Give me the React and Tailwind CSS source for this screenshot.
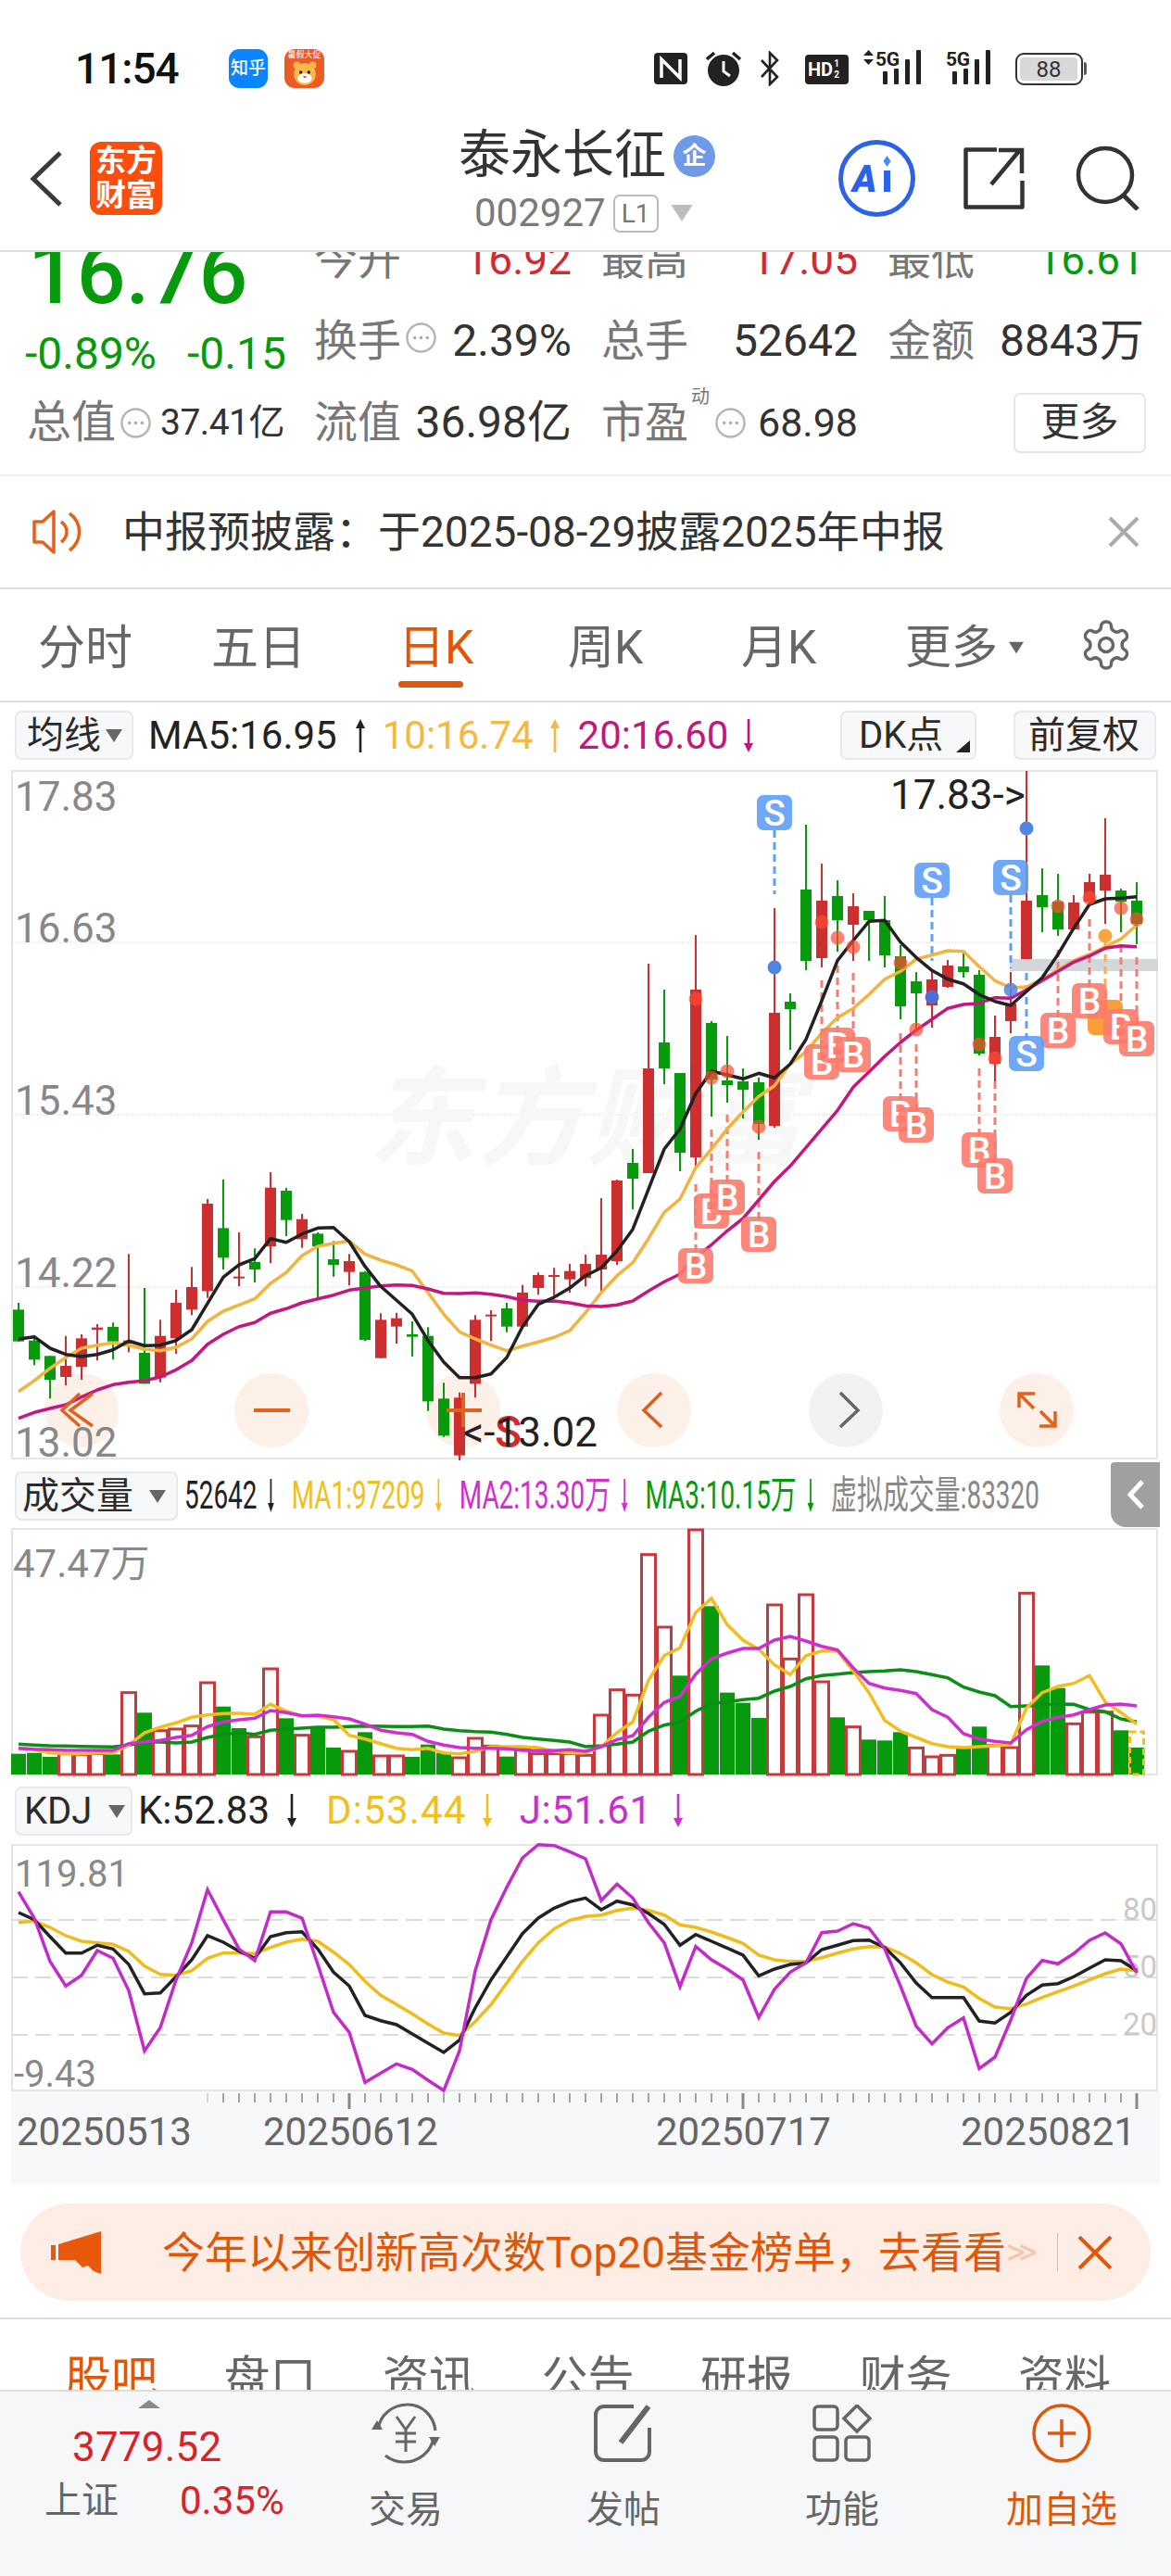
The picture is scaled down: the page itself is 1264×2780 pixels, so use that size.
import React from "react";

const X = (i) => 20 + 17 * i;
const z = (vals, off) => vals.map((v) => off + v / 3);
const pts = (ys) => ys.map((y, i) => `${X(i)},${y.toFixed(1)}`).join(" ");

const RED = "#cc2f2f";
const GREEN = "#079a0d";

const c1 = [
  [678,700,803,803,"g"],[782,800,862,880,"g"],[850,850,927,988,"g"],[785,882,918,945,"r"],[780,793,885,927,"r"],
  [747,758,765,865,"r"],[742,756,803,862,"g"],[520,800,810,838,"r"],[630,840,940,940,"g"],[733,785,920,935,"r"],
  [635,678,793,843,"r"],[562,627,700,718,"r"],[342,357,640,662,"r"],[278,436,532,570,"g"],[450,593,597,625,"r"],
  [502,546,570,612,"g"],[255,305,495,550,"r"],[306,315,410,462,"g"],[390,407,472,500,"r"],[450,454,495,660,"g"],
  [478,537,555,593,"g"],[520,543,578,622,"r"],[575,578,798,802,"g"],[712,733,857,857,"r"],[710,728,755,810,"r"],
  [738,780,788,852,"g"],[757,785,997,1028,"g"],[937,988,1108,1112,"g"],[968,985,1172,1188,"r"],[718,733,940,985,"r"],
  [702,716,720,802,"r"],[678,696,755,773,"g"],[620,645,755,755,"r"],[580,588,630,652,"r"],[565,588,592,655,"r"],
  [552,575,602,645,"r"],[522,552,598,625,"r"],
].map(([a, b, c, d, k]) => [1180 + a / 3, 1180 + b / 3, 1180 + c / 3, 1180 + d / 3, k]);

const c2 = [
  [1293,1354,1370,1393,"r"],[1273,1274,1361,1365,"r"],[1240,1255,1272,1305,"g"],[1040,1153,1266,1266,"r"],[1068,1125,1153,1170,"g"],
  [1158,1158,1244,1264,"g"],[1009,1068,1249,1260,"r"],[1102,1104,1165,1205,"g"],[1118,1166,1171,1190,"g"],[1153,1167,1176,1207,"g"],
  [1163,1168,1213,1230,"g"],[980,1093,1215,1217,"r"],[1072,1081,1089,1133,"g"],[890,960,1037,1047,"g"],[932,972,1034,1044,"r"],
  [950,967,993,1027,"g"],[964,978,998,1037,"r"],[983,983,993,1037,"g"],[967,993,1031,1044,"g"],[1020,1032,1086,1100,"g"],
  [1049,1059,1072,1110,"g"],[1047,1057,1085,1109,"r"],[1036,1042,1065,1066,"r"],[1028,1043,1049,1055,"g"],[1047,1052,1137,1139,"g"],
  [1096,1119,1148,1167,"r"],[1049,1083,1102,1115,"r"],[832,972,1035,1035,"r"],[937,966,979,1006,"g"],[943,973,1003,1010,"g"],
  [966,974,1003,1003,"r"],[943,952,973,977,"r"],[883,944,961,997,"r"],[959,961,973,1006,"g"],[952,972,997,1019,"g"],
];
const candles = [...c1, ...c2];

const black = [
  ...z([795,788,825,845,852,845,830,802,817,815,800,765,680,595,555,535,470,482,455,436,434,480,560,625,670,715,800,870,920,920,908,855,755,683,660,630,590],1180),
  ...z([565,510,440,310,180,115],1180),
  ...z([1260,1188,1200,1213,1195,1210,1165,1085,960,830,765,703,700,770,820,862,890,905,940,962,975,930,885,810,725,648,630,628,623],760),
];
const orange = [
  ...z([965,930,890,855,825,815,808,815,828,833,822,795,738,705,685,665,615,580,525,495,485,478,520,540,555,575,645,715,772,795,815,833,818,805,790,768,710],1180),
  ...z([645,590,548,470,385,342,240,180,115,60,10],1180),
  ...z([1235,1165,1125,1065,1015,985,940,890,865,825,812,798,800,850,895,918,915,890,860,830,810,785,760,715],760),
];
const magenta = [
  ...z([1052,1033,1020,1008,983,960,943,935,930,918,895,865,812,780,755,742,712,697,678,665,653,637,630,623,620,622,633,647,648,646,650,658,670,673,672,678,688],1180),
  ...z([690,685,672,640,610,585,530,490,445,405,345,285,235,175,115,55],1180),
  ...z([1240,1190,1140,1095,1055,1020,985,972,968,950,952,925,895,865,835,815,790,782,785],760),
];

const bBadges = [
  [43,1366,1278],[44,1307,1219],[45,1292,1203],[47,1332,1243],
  [51,1146,1058],[52,1128,1042],[53,1138,1050],[56,1202,1115],
  [57,1214,1127],[61,1241,1153],[62,1269,1167],[66,1112,1025],
  [68,1080,992],[70,1108,1020],[71,1121,1033],
];
const redDots = [[43,1078],[44,1163],[45,1156],[47,1216],[51,995],[52,1012],[53,1022],[56,1039],[57,1111],[61,1127],[62,1142],[66,978],[68,969],[70,980],[71,992]];

const vol1 = "908g 905g 918g 905r 908r 905r 910g 707r 775g 830r 825r 815r 675r 755g 825g 850r 630r 793g 845r 820g 888g 897r 838g 912r 912r 918g 878g 905g 918r 855r 880r 917g 888r 905r 905r 905r 910r".split(" ");
const vol2 = "780r 698r 715r 260r 495r 655g 180r 430g 710g 743g 792g 423r 598r 390r 672r 790g 818r 862g 865g 838g 886r 915r 910r 890g 820g 878r 885r 385r 622g 695g 808r 770r 770r 832g 888g".split(" ");
const vols = [...vol1, ...vol2].map((s) => [1590 + parseInt(s) / 3, s.slice(-1)]);
const volY = z([890,895,905,908,908,905,905,880,840,822,808,790,782,778,777,780,748,770,785,787,797,848,860,875,890,895,890,905,908,900,885,885,885,888,900,905,905,885,840,805,670,590,565,450,405,490,540,570,620,652,590,575,575,640,710,800,835,855,875,885,888,885,882,878,760,710,690,680,655,740,775,812],1590);
const volM = z([890,893,895,897,897,897,897,875,870,865,855,848,820,805,798,793,768,775,785,783,788,795,812,832,840,845,868,880,888,890,890,892,897,898,898,895,900,885,862,850,790,742,722,650,600,582,567,567,540,528,543,560,572,630,680,695,703,713,765,790,843,860,868,873,830,803,790,782,765,750,747,753],1590);
const volG = z([877,880,882,883,884,885,886,880,870,870,873,870,855,845,840,845,832,828,825,822,822,820,818,819,820,820,818,828,833,836,838,845,855,860,865,870,885,882,877,870,835,815,805,770,745,740,733,728,705,690,665,655,650,645,642,640,636,642,652,662,692,708,720,755,753,750,747,748,765,772,795,805],1590);

const kdjJ = z([305,390,530,610,575,495,520,625,820,745,590,470,298,395,490,528,370,370,390,540,695,760,922,892,862,880,915,948,820,560,395,290,195,152,155,175,198,333,280,325,405,470,612,482,525,555,590,712,620,565,535,437,432,408,422,490,610,740,797,745,713,877,840,720,585,527,538,505,462,438,473,567],1940);
const kdjK = z([372,395,450,503,503,478,490,540,635,632,580,525,447,468,497,520,450,437,434,490,565,610,705,722,735,765,795,825,785,680,590,515,440,390,358,337,325,363,335,347,375,410,478,443,465,487,510,577,555,540,535,492,478,463,461,485,535,600,647,647,647,723,730,695,640,607,602,580,552,525,528,560],1940);
const kdjD = z([404,400,420,447,465,470,475,498,545,572,575,560,520,503,503,505,485,468,458,465,500,540,595,640,670,700,733,762,770,725,670,600,530,470,425,397,385,380,365,358,365,380,412,420,435,453,472,510,525,530,530,518,503,490,482,483,505,535,573,597,613,650,678,683,668,647,628,610,590,570,555,560],1940);

function DotCircle({ className }) {
  return (
    <svg viewBox="0 0 36 36" className={className}>
      <circle cx="18" cy="18" r="15.5" fill="none" stroke="#b5b5b5" strokeWidth="2.5" />
      <circle cx="11" cy="18" r="1.8" fill="#aaa" /><circle cx="18" cy="18" r="1.8" fill="#aaa" /><circle cx="25" cy="18" r="1.8" fill="#aaa" />
    </svg>
  );
}

function Arrow({ up, color, className = "" }) {
  return (
    <svg viewBox="0 0 12 36" className={`w-[12px] h-[36px] shrink-0 ${className}`}>
      {up ? (
        <>
          <polygon points="6,0 11,10 1,10" fill={color} />
          <line x1="6" y1="8" x2="6" y2="36" stroke={color} strokeWidth="2.6" />
        </>
      ) : (
        <>
          <polygon points="6,36 11,26 1,26" fill={color} />
          <line x1="6" y1="0" x2="6" y2="28" stroke={color} strokeWidth="2.6" />
        </>
      )}
    </svg>
  );
}

function Tri({ className = "", color = "#666" }) {
  return (
    <svg viewBox="0 0 18 14" className={className}>
      <polygon points="0,0 18,0 9,14" fill={color} />
    </svg>
  );
}

function ToolBtn({ className = "", children }) {
  return (
    <div className={`h-[53px] rounded-[7px] border-2 border-[#e8e9eb] bg-[#f7f8fa] flex items-center shrink-0 text-[40px] leading-none text-[#2b2b2b] ${className}`}>
      {children}
    </div>
  );
}

function SignalA({ className = "" }) {
  return (
    <svg viewBox="0 0 70 38" className={className}>
      <polygon points="0,7 5.5,1 11,7" fill="#222" />
      <polygon points="0,11 11,11 5.5,17" fill="#222" />
      <text x="13" y="18" fontSize="21" fontWeight="700" fill="#222" textLength="26" lengthAdjust="spacingAndGlyphsWidth">5G</text>
      <rect x="21" y="24" width="5" height="14" rx="1" fill="#222" />
      <rect x="33" y="21" width="5" height="17" rx="1" fill="#222" />
      <rect x="45" y="11" width="5" height="27" rx="1" fill="#222" />
      <rect x="57" y="1" width="5" height="37" rx="1" fill="#222" />
    </svg>
  );
}

function SignalB({ className = "" }) {
  return (
    <svg viewBox="0 0 55 38" className={className}>
      <text x="0" y="18" fontSize="21" fontWeight="700" fill="#222" textLength="26" lengthAdjust="spacingAndGlyphsWidth">5G</text>
      <rect x="7" y="24" width="5" height="14" rx="1" fill="#222" />
      <rect x="19" y="21" width="5" height="17" rx="1" fill="#222" />
      <rect x="31" y="11" width="5" height="27" rx="1" fill="#222" />
      <rect x="43" y="1" width="5" height="37" rx="1" fill="#222" />
    </svg>
  );
}

function StatusBar() {
  return (
    <div className="h-[140px] flex items-start pt-[53px] relative">
      <div className="ml-[81px] w-[120px] h-[42px] text-[46px] leading-[42px] font-medium text-[#111] tracking-[-1px]">11:54</div>
      <div className="ml-[46px] w-[42px] h-[42px] rounded-[11px] bg-[#0a84ff] text-white text-[19px] leading-[42px] text-center font-medium">知乎</div>
      <div className="ml-[18px] w-[43px] h-[42px] rounded-[11px] bg-[#ee5a24] overflow-hidden flex flex-col items-center">
        <div className="text-[9px] leading-[12px] text-white whitespace-nowrap">暑假大促</div>
        <svg viewBox="0 0 30 26" className="w-[34px] h-[28px]">
          <circle cx="15" cy="14" r="11" fill="#f8b84a" />
          <circle cx="7" cy="5" r="3.5" fill="#f8b84a" /><circle cx="23" cy="5" r="3.5" fill="#f8b84a" />
          <ellipse cx="15" cy="18" rx="7" ry="5" fill="#fff" />
          <circle cx="11" cy="12" r="1.6" fill="#222" /><circle cx="19" cy="12" r="1.6" fill="#222" />
          <path d="M13 16h4l-2 2z" fill="#c33" />
        </svg>
      </div>
      <div className="ml-auto mr-[95px] flex items-start">
        <svg viewBox="0 0 36 34" className="w-[36px] h-[34px] mt-[4px]">
          <rect width="36" height="34" rx="4" fill="#222" />
          <path d="M8 27V7l20 20V7" fill="none" stroke="#fff" strokeWidth="3.5" />
        </svg>
        <svg viewBox="0 0 40 38" className="w-[40px] h-[38px] ml-[19px] mt-[2px]">
          <circle cx="20" cy="21" r="17" fill="#222" />
          <path d="M20 11v11l7 5" fill="none" stroke="#fff" strokeWidth="3" />
          <path d="M2 9l8-7M38 9l-8-7" stroke="#222" strokeWidth="3.5" />
        </svg>
        <svg viewBox="0 0 24 38" className="w-[24px] h-[38px] ml-[18px] mt-[2px]">
          <path d="M3 10l17 18-8 8V2l8 8L3 28" fill="none" stroke="#222" strokeWidth="2.6" />
        </svg>
        <div className="w-[47px] h-[32px] mt-[6px] ml-[26px] rounded-[4px] bg-[#222] text-white text-[20px] leading-[32px] font-bold pl-[3px] flex">
          <span>HD</span>
          <span className="text-[10px] leading-[12px] mt-[4px] ml-[1px]">1<br />2</span>
        </div>
        <SignalA className="w-[70px] h-[38px] ml-[16px]" />
        <SignalB className="w-[55px] h-[38px] ml-[19px]" />
        <div className="ml-[20px] mt-[4px] w-[73px] h-[35px] rounded-[9px] border-2 border-[#333] p-[3px] relative">
          <div className="w-[62px] h-[25px] rounded-[4px] bg-[#d8d8d8] text-[24px] leading-[26px] text-center text-[#333]">88</div>
          <div className="absolute -right-[6px] top-[8px] w-[3px] h-[14px] bg-[#555] rounded-r" />
        </div>
      </div>
    </div>
  );
}

function NavBar() {
  return (
    <div className="h-[130px] grid grid-cols-[1fr_auto_1fr] items-start border-b-2 border-[#dedede] box-content">
      <div className="flex items-start pl-[31px]">
        <svg viewBox="0 0 37 62" className="w-[37px] h-[62px] mt-[22px]">
          <path d="M34 3L5 31l29 28" fill="none" stroke="#3a3a3a" strokeWidth="5" />
        </svg>
        <div className="ml-[29px] mt-[13px] w-[78px] h-[79px] rounded-[12px] bg-[#fb4d0d] text-white text-[33px] leading-[37px] font-bold text-center pt-[2px]">
          东方<br />财富
        </div>
      </div>
      <div className="flex flex-col items-center w-[274px]">
        <div className="flex items-center h-[60px] -mt-[3px] w-full">
          <span className="text-[56px] leading-[60px] text-[#333] whitespace-nowrap">泰永长征</span>
          <span className="ml-[8px] mt-[3px] w-[45px] h-[45px] rounded-full bg-[#6f9ae8] text-white text-[26px] leading-[45px] text-center font-bold shrink-0">企</span>
        </div>
        <div className="flex items-center mt-[12px] w-[240px]">
          <span className="text-[42px] leading-[42px] text-[#7a7a7a]">002927</span>
          <span className="ml-[8px] w-[49px] h-[41px] rounded-[7px] border-2 border-[#bbb] text-[28px] leading-[37px] text-center text-[#777]">L1</span>
          <Tri className="ml-[12px] w-[26px] h-[18px]" color="#bdbdbd" />
        </div>
      </div>
      <div className="flex items-start justify-end pr-[34px]">
        <svg viewBox="0 0 83 83" className="w-[83px] h-[83px] mt-[11px]">
          <circle cx="41.5" cy="41.5" r="39" fill="#fff" stroke="#2c62e6" strokeWidth="5" />
          <text x="15" y="56" fontSize="40" fontWeight="900" fontStyle="italic" fill="#2c62e6">A</text>
          <rect x="49" y="33" width="7" height="23" fill="#2c62e6" />
          <path d="M52.5 17l4 6-4 6-4-6z" fill="#4a8cf5" />
        </svg>
        <svg viewBox="0 0 66 67" className="w-[66px] h-[67px] ml-[52px] mt-[19px]">
          <path d="M36 2.5H2.5v62h61V36" fill="none" stroke="#333" strokeWidth="4.5" strokeLinejoin="round" />
          <path d="M30 40L60 4M38 3h25v25" fill="none" stroke="#333" strokeWidth="4.5" />
        </svg>
        <svg viewBox="0 0 69 70" className="w-[69px] h-[70px] ml-[55px] mt-[17px]">
          <circle cx="32" cy="32" r="29" fill="none" stroke="#333" strokeWidth="4.5" />
          <path d="M52 54l15 15" stroke="#333" strokeWidth="5" />
        </svg>
      </div>
    </div>
  );
}

function Cell({ label, children }) {
  return (
    <div className="flex justify-between items-center h-[88px] leading-[88px] whitespace-nowrap">
      <span className="text-[#777] text-[47px]">{label}</span>
      {children}
    </div>
  );
}

function Stats() {
  return (
    <div className="h-[240px] overflow-hidden border-b-2 border-[#eeeeee] box-content">
      <div className="flex -mt-[36px]">
        <div className="w-[339px] shrink-0 flex flex-col">
          <div className="h-[120px] leading-[120px] pl-[30px] text-[93px] font-medium text-[#079a0d]">16.76</div>
          <div className="h-[56px] leading-[52px] pl-[27px] text-[48px] text-[#079a0d] flex">
            <span>-0.89%</span><span className="ml-[33px]">-0.15</span>
          </div>
          <div className="h-[88px] flex items-center pl-[29px] whitespace-nowrap">
            <span className="text-[48px] text-[#777]">总值</span>
            <DotCircle className="w-[35px] h-[35px] ml-[4px]" />
            <span className="ml-[9px] text-[39px] text-[#333] tracking-[-0.5px]">37.41亿</span>
          </div>
        </div>
        <div className="grid grid-cols-[278px_277px_277px] gap-x-[32px]">
          <Cell label="今开"><span className="text-[#d42a2f] text-[46px]">16.92</span></Cell>
          <Cell label="最高"><span className="text-[#d42a2f] text-[46px]">17.05</span></Cell>
          <Cell label="最低"><span className="text-[#079a0d] text-[46px]">16.61</span></Cell>
          <Cell label="换手">
            <DotCircle className="w-[35px] h-[35px] -ml-[12px] -mt-[8px]" />
            <span className="text-[#333] text-[48px]">2.39%</span>
          </Cell>
          <Cell label="总手"><span className="text-[#333] text-[48px]">52642</span></Cell>
          <Cell label="金额"><span className="text-[#333] text-[48px]">8843万</span></Cell>
          <Cell label="流值"><span className="text-[#333] text-[48px]">36.98亿</span></Cell>
          <div className="flex items-center h-[88px] whitespace-nowrap">
            <span className="text-[#777] text-[47px]">市盈</span>
            <span className="text-[#777] text-[20px] leading-[20px] self-start mt-[6px] ml-[3px]">动</span>
            <DotCircle className="w-[35px] h-[35px] ml-[5px]" />
            <span className="ml-auto text-[#333] text-[43px]">68.98</span>
          </div>
          <div className="flex items-center justify-end h-[88px]">
            <div className="mr-[-2px] w-[143px] h-[65px] rounded-[7px] border-2 border-[#e6e6e6] text-[42px] leading-[60px] text-center text-[#333]">更多</div>
          </div>
        </div>
      </div>
    </div>
  );
}

function Notice() {
  return (
    <div className="h-[120px] flex items-center border-b-2 border-[#dddddd] box-content">
      <svg viewBox="0 0 58 50" className="w-[58px] h-[50px] ml-[35px]">
        <path d="M23 3v44L11 36H2V14h9z" fill="none" stroke="#e4601b" strokeWidth="3.5" strokeLinejoin="round" />
        <path d="M31 14c8 6 8 16 0 22" fill="none" stroke="#e4601b" strokeWidth="3.5" />
        <path d="M40 5c14 10 14 30 0 40" fill="none" stroke="#e4601b" strokeWidth="3.5" />
      </svg>
      <span className="ml-[39px] text-[46px] leading-none text-[#333] whitespace-nowrap">中报预披露：于2025-08-29披露2025年中报</span>
      <svg viewBox="0 0 34 34" className="w-[34px] h-[34px] ml-auto mr-[34px]">
        <path d="M2 2l30 30M32 2L2 32" stroke="#aaa" strokeWidth="4" />
      </svg>
    </div>
  );
}

function Tabs() {
  return (
    <div className="h-[122px] pt-[6px] flex items-center border-b-2 border-[#dddddd] box-border text-[50px] leading-none text-[#666] whitespace-nowrap">
      <span className="ml-[41px] w-[102px] text-[51px]">分时</span>
      <span className="ml-[85px] w-[94px] text-[51px]">五日</span>
      <span className="ml-[108px] w-[75px] text-[#e0570b] relative">
        日K
        <span className="absolute left-0 top-[61px] w-[70px] h-[7px] rounded-full bg-[#e0570b]" />
      </span>
      <span className="ml-[108px] w-[80px]">周K</span>
      <span className="ml-[107px] w-[81px]">月K</span>
      <span className="ml-[96px] w-[100px]">更多</span>
      <Tri className="ml-[12px] w-[16px] h-[14px]" />
      <svg viewBox="0 0 24 24" className="ml-[59px] -mt-[6px] w-[60px] h-[60px]" fill="none" stroke="#666" strokeWidth="1.4" strokeLinejoin="round">
        <path d="M12.22 2h-.44a2 2 0 0 0-2 2v.18a2 2 0 0 1-1 1.73l-.43.25a2 2 0 0 1-2 0l-.15-.08a2 2 0 0 0-2.73.73l-.22.38a2 2 0 0 0 .73 2.73l.15.1a2 2 0 0 1 1 1.72v.51a2 2 0 0 1-1 1.74l-.15.09a2 2 0 0 0-.73 2.73l.22.38a2 2 0 0 0 2.73.73l.15-.08a2 2 0 0 1 2 0l.43.25a2 2 0 0 1 1 1.73V20a2 2 0 0 0 2 2h.44a2 2 0 0 0 2-2v-.18a2 2 0 0 1 1-1.73l.43-.25a2 2 0 0 1 2 0l.15.08a2 2 0 0 0 2.73-.73l.22-.39a2 2 0 0 0-.73-2.73l-.15-.08a2 2 0 0 1-1-1.74v-.5a2 2 0 0 1 1-1.74l.15-.09a2 2 0 0 0 .73-2.73l-.22-.38a2 2 0 0 0-2.73-.73l-.15.08a2 2 0 0 1-2 0l-.43-.25a2 2 0 0 1-1-1.73V4a2 2 0 0 0-2-2z" />
        <circle cx="12" cy="12" r="3" />
      </svg>
    </div>
  );
}

function MainToolbar() {
  return (
    <div className="h-[73px] pt-[9px] flex items-start pl-[16px] pr-[16px] whitespace-nowrap">
      <ToolBtn className="w-[128px] pl-[11px]">
        <span>均线</span>
        <Tri className="ml-[5px] w-[18px] h-[14px]" />
      </ToolBtn>
      <div className="flex items-center h-[53px] text-[42px] leading-none">
        <span className="ml-[16px] text-[#222]">MA5:16.95</span>
        <Arrow up color="#222" className="ml-[19px]" />
        <span className="ml-[18px] text-[#f5b942]">10:16.74</span>
        <Arrow up color="#f5b942" className="ml-[17px]" />
        <span className="ml-[19px] text-[#c0187e]">20:16.60</span>
        <Arrow color="#c0187e" className="ml-[16px]" />
      </div>
      <ToolBtn className="ml-auto w-[147px] pl-[18px] relative">
        <span>DK点</span>
        <svg viewBox="0 0 15 13" className="absolute right-[5px] bottom-[6px] w-[15px] h-[13px]"><polygon points="15,0 15,13 0,13" fill="#222" /></svg>
      </ToolBtn>
      <ToolBtn className="ml-[40px] w-[154px] pl-[14px]">前复权</ToolBtn>
    </div>
  );
}

function Badge({ x, y, letter, fill }) {
  return (
    <g>
      <rect x={x - 19} y={y - 19} width="38" height="38" rx="7" fill={fill} opacity="0.9" />
      <text x={x} y={y + 14} textAnchor="middle" fontSize="39" fontWeight="500" fill="#fff">{letter}</text>
    </g>
  );
}

function CircleBtn({ cx, fill = "#fdf0e9" }) {
  return <circle cx={cx} cy="1522" r="40" fill={fill} />;
}

function MainChart() {
  return (
    <div className="ml-[12px] w-[1238px] h-[744px] border-2 border-[#e4e5e7] relative">
      <svg viewBox="12 831 1238 744" className="block -m-[2px] w-[1238px] h-[744px] overflow-visible">
        {[1017, 1203, 1389].map((y) => (
          <line key={y} x1="13" x2="1249" y1={y} y2={y} stroke="#d8d8d8" strokeWidth="1" strokeDasharray="1.5 1.5" />
        ))}
        <text x="397" y="1248" fontSize="116" fontWeight="700" fontStyle="italic" fill="#f7f7f7" letterSpacing="2">东方财富</text>
        <rect x="1090" y="1035" width="160" height="13" fill="#d3d6da" />
        {[88, 293, 500, 706, 1119].map((c) => <CircleBtn key={c} cx={c} />)}
        <CircleBtn cx={913} fill="#f2f2f2" />

        {bBadges.map(([i, y, top]) => (
          <line key={i} x1={X(i)} x2={X(i)} y1={top} y2={y} stroke="#f27e70" strokeWidth="3" strokeDasharray="8 5" />
        ))}
        <line x1={X(69)} x2={X(69)} y1="1017" y2="1098" stroke="#f8b04c" strokeWidth="3" strokeDasharray="8 5" />
        <line x1={X(48)} x2={X(48)} y1="896" y2="965" stroke="#5f9ff5" strokeWidth="3" strokeDasharray="8 5" />
        <line x1={X(58)} x2={X(58)} y1="969" y2="1037" stroke="#5f9ff5" strokeWidth="3" strokeDasharray="8 5" />
        <line x1={X(63)} x2={X(63)} y1="966" y2="1045" stroke="#5f9ff5" strokeWidth="3" strokeDasharray="8 5" />
        <line x1={X(64)} x2={X(64)} y1="1050" y2="1120" stroke="#5f9ff5" strokeWidth="3" strokeDasharray="8 5" />

        {candles.map(([hi, t, b, lo, k], i) => {
          const col = k === "r" ? RED : GREEN;
          return (
            <g key={i}>
              <line x1={X(i)} x2={X(i)} y1={hi} y2={lo} stroke={col} strokeWidth="2" />
              <rect x={X(i) - 6} y={t} width="12" height={Math.max(b - t, 2)} fill={col} />
            </g>
          );
        })}

        <polyline points={pts(orange)} fill="none" stroke="#f2b33f" strokeWidth="3.5" strokeLinejoin="round" />
        <polyline points={pts(magenta)} fill="none" stroke="#c2187f" strokeWidth="3.5" strokeLinejoin="round" />
        <polyline points={pts(black)} fill="none" stroke="#222" strokeWidth="3.5" strokeLinejoin="round" />

        {redDots.map(([i, y]) => <circle key={i} cx={X(i)} cy={y} r="7.5" fill="#ff4a33" opacity="0.7" />)}
        <circle cx={X(69)} cy="1010" r="7.5" fill="#f9a63a" />
        <circle cx={X(48)} cy="1044" r="7.5" fill="#4f86e6" />
        <circle cx={X(58)} cy="1076" r="7.5" fill="#4f6fd8" />
        <circle cx={X(63)} cy="1068" r="7.5" fill="#4f86e6" opacity="0.85" />
        <circle cx={X(64)} cy="894" r="7.5" fill="#4f86e6" />

        <rect x={X(69) - 19} y="1079" width="38" height="38" rx="7" fill="#fb9d38" />
        {bBadges.map(([i, y]) => <Badge key={i} x={X(i)} y={y} letter="B" fill="#fb7b6b" />)}
        <Badge x={X(48)} y={877} letter="S" fill="#5f9ff5" />
        <Badge x={X(58)} y={950} letter="S" fill="#5f9ff5" />
        <Badge x={X(63)} y={947} letter="S" fill="#5f9ff5" />
        <Badge x={X(64)} y={1137} letter="S" fill="#5f9ff5" />

        <path d="M100 1504l-24 18 24 17M86 1504l-19 18 19 17" fill="none" stroke="#e2611d" strokeWidth="3.5" />
        <path d="M274 1522h39" stroke="#e2611d" strokeWidth="4" />
        <path d="M482 1522h38M500 1503v37" stroke="#e2611d" strokeWidth="4" />
        <path d="M714 1503l-19 19 19 18" fill="none" stroke="#d8601f" strokeWidth="3.5" />
        <path d="M907 1503l19 19-19 18" fill="none" stroke="#666" strokeWidth="3.5" />
        <path d="M1100 1519v-15h17M1101 1505l15 15M1139 1523v16h-17M1138 1538l-15-15" fill="none" stroke="#e2611d" strokeWidth="3.5" />

        <g fontSize="44" fill="#888">
          <text x="16" y="875">17.83</text>
          <text x="16" y="1017">16.63</text>
          <text x="16" y="1203">15.43</text>
          <text x="16" y="1389">14.22</text>
          <text x="16" y="1572">13.02</text>
        </g>
        <text x="961" y="873" fontSize="44" fill="#222">17.83-&gt;</text>
        <text x="534" y="1562" fontSize="48" fontWeight="500" fill="#d12b2b">S</text>
        <text x="500" y="1561" fontSize="44" fill="#222">&lt;-13.02</text>
      </svg>
    </div>
  );
}

function VolToolbar() {
  const Item = ({ color, text }) => (
    <div className="flex items-center gap-[15px] shrink-0">
      <span style={{ color }}>{text}</span>
      <Arrow color={color} className="w-[15px]" />
    </div>
  );
  return (
    <div className="h-[74px] pt-[13px] flex items-start pl-[16px] whitespace-nowrap relative">
      <ToolBtn className="w-[176px] pl-[6px] h-[51px]">
        <span>成交量</span>
        <Tri className="ml-[17px] w-[18px] h-[14px]" />
      </ToolBtn>
      <div className="ml-[7px] h-[51px] flex items-center gap-[26px] origin-left scale-x-[0.665] text-[42px] leading-none shrink-0">
        <Item color="#222" text="52642" />
        <Item color="#f2c01c" text="MA1:97209" />
        <Item color="#d22fd0" text="MA2:13.30万" />
        <Item color="#079a0d" text="MA3:10.15万" />
        <span className="text-[#888]">虚拟成交量:83320</span>
      </div>
      <div className="absolute left-[1199px] top-[3px] w-[53px] h-[70px] rounded-tl-[4px] rounded-bl-[16px] bg-[#a0a0a0] flex items-center justify-center">
        <svg viewBox="0 0 20 34" className="w-[20px] h-[34px]"><path d="M17 3L4 17l13 14" fill="none" stroke="#fff" strokeWidth="5" /></svg>
      </div>
    </div>
  );
}

function VolChart() {
  return (
    <div className="ml-[12px] w-[1238px] h-[267px] border-2 border-[#e4e5e7] relative">
      <svg viewBox="12 1649 1238 267" className="block -m-[2px] w-[1238px] h-[267px] overflow-visible">
        {vols.map(([top, k], i) =>
          k === "g" ? (
            <rect key={i} x={X(i) - 8} y={top} width="16" height={1915 - top} fill={GREEN} />
          ) : (
            <rect key={i} x={X(i) - 7.5} y={top + 1} width="15" height={1914 - top} fill="none" stroke="#c53a3c" strokeWidth="3" />
          )
        )}
        <rect x={X(71) - 7.5} y="1869" width="15" height="46" fill="none" stroke="#f2c01c" strokeWidth="3" strokeDasharray="7 4" />
        <polyline points={pts(volG)} fill="none" stroke="#0a8f14" strokeWidth="3.5" />
        <polyline points={pts(volY)} fill="none" stroke="#f2bd1f" strokeWidth="3.5" />
        <polyline points={pts(volM)} fill="none" stroke="#cf2fcf" strokeWidth="3.5" />
        <text x="14" y="1702" fontSize="42" fill="#888">47.47万</text>
      </svg>
    </div>
  );
}

function KdjToolbar() {
  return (
    <div className="h-[74px] pt-[12px] flex items-start pl-[16px] whitespace-nowrap">
      <ToolBtn className="w-[127px] pl-[8px] h-[52px]">
        <span>KDJ</span>
        <Tri className="ml-[18px] w-[18px] h-[14px]" />
      </ToolBtn>
      <div className="h-[52px] flex items-center text-[42px] leading-none">
        <span className="ml-[6px] text-[#222]">K:52.83</span>
        <Arrow color="#222" className="ml-[18px]" />
        <span className="ml-[31px] text-[#f2c01c] tracking-[1.2px]">D:53.44</span>
        <Arrow color="#f2c01c" className="ml-[16px]" />
        <span className="ml-[29px] text-[#c92fd0] tracking-[0.6px]">J:51.61</span>
        <Arrow color="#c92fd0" className="ml-[22px]" />
      </div>
    </div>
  );
}

function KdjChart() {
  return (
    <div className="ml-[12px] w-[1238px] h-[267px] border-2 border-[#e4e5e7] relative">
      <svg viewBox="12 1990 1238 267" className="block -m-[2px] w-[1238px] h-[267px] overflow-visible">
        {[2072, 2134, 2196].map((y) => (
          <line key={y} x1="13" x2="1249" y1={y} y2={y} stroke="#dcdcdc" strokeWidth="2" strokeDasharray="17 8" />
        ))}
        <g fontSize="33" fill="#c9c9c9">
          <text x="1212" y="2072">80</text>
          <text x="1212" y="2134">50</text>
          <text x="1212" y="2196">20</text>
        </g>
        <polyline points={pts(kdjD)} fill="none" stroke="#f0bc1c" strokeWidth="3.5" />
        <polyline points={pts(kdjK)} fill="none" stroke="#222" strokeWidth="3.5" />
        <polyline points={pts(kdjJ)} fill="none" stroke="#c42cc9" strokeWidth="3.5" />
        <text x="16" y="2036" fontSize="40" fill="#888">119.81</text>
        <text x="15" y="2252" fontSize="40" fill="#888">-9.43</text>
      </svg>
    </div>
  );
}

function DateStrip() {
  return (
    <div className="ml-[12px] w-[1240px] h-[100px] bg-[#f7f8fa]">
      <svg viewBox="12 2257 1240 100" className="block w-[1240px] h-[100px]">
        {candles.map((_, i) => {
          if (i < 12) return null;
          const major = i === 21 || i === 46 || i === 71;
          return (
            <line key={i} x1={X(i)} x2={X(i)} y1="2259" y2={major ? 2276 : 2269} stroke={i === 12 ? "#ccc" : "#888"} strokeWidth={major ? 3 : 1.5} />
          );
        })}
        <g fontSize="42" fill="#666">
          <text x="18" y="2315">20250513</text>
          <text x="284" y="2315">20250612</text>
          <text x="708" y="2315">20250717</text>
          <text x="1037" y="2315">20250821</text>
        </g>
      </svg>
    </div>
  );
}

function Banner() {
  return (
    <div className="h-[146px] border-b-2 border-[#dddddd] box-border pt-[21px] px-[22px]">
      <div className="h-[105px] rounded-full bg-[#fdede5] flex items-center whitespace-nowrap">
        <svg viewBox="0 0 54 46" className="ml-[33px] w-[54px] h-[46px]">
          <rect x="0" y="15" width="5" height="16" fill="#e8590c" />
          <path d="M8 14L54 0v46l-8-3-6-6-6 2-8-8H8z" fill="#e8590c" />
        </svg>
        <span className="ml-[66px] text-[46px] leading-none text-[#e0570b]">今年以来创新高次数Top20基金榜单，去看看</span>
        <span className="w-[36px] overflow-hidden text-[40px] leading-none text-[#f4c8b0] tracking-[-8px]">&gt;&gt;</span>
        <div className="ml-[19px] w-[1px] h-[41px] bg-[#e8b79c]" />
        <svg viewBox="0 0 38 36" className="ml-[21px] w-[38px] h-[36px]">
          <path d="M2 1l34 34M36 1L2 35" stroke="#e0570b" strokeWidth="4" />
        </svg>
      </div>
    </div>
  );
}

function BottomTabs() {
  const t = ["盘口", "资讯", "公告", "研报", "财务", "资料"];
  return (
    <div className="h-[76px] overflow-hidden flex pt-[38px] pl-[70px] whitespace-nowrap">
      <span className="text-[50px] leading-[52px] text-[#e0570b] w-[100px]">股吧</span>
      {t.map((s) => (
        <span key={s} className="text-[50px] leading-[52px] text-[#666] ml-[71.5px] w-[100px]">{s}</span>
      ))}
    </div>
  );
}

function BottomItem({ width, ml, label, color = "#666", children }) {
  return (
    <div className="flex flex-col items-center shrink-0" style={{ width, marginLeft: ml }}>
      <div className="h-[90px] flex items-center">{children}</div>
      <div className="mt-[16px] text-[40px] leading-[44px]" style={{ color }}>{label}</div>
    </div>
  );
}

function BottomBar() {
  return (
    <div className="flex-1 bg-[#f6f7f9] border-t-2 border-[#dddddd] flex items-start">
      <div className="w-[330px] shrink-0 flex flex-col relative">
        <svg viewBox="0 0 24 9" className="absolute left-[149px] top-[9px] w-[24px] h-[9px]"><polygon points="12,0 24,9 0,9" fill="#8a8a8a" /></svg>
        <div className="pl-[78px] mt-[38px] text-[44px] leading-[44px] text-[#d9222a] tracking-[0.2px]">3779.52</div>
        <div className="flex items-center pl-[48px] mt-[14px]">
          <span className="text-[40px] leading-[44px] text-[#666]">上证</span>
          <span className="ml-[66px] text-[42px] leading-[44px] text-[#d9222a]">0.35%</span>
        </div>
      </div>
      <BottomItem width={80} ml={68} label="交易">
        <svg viewBox="0 0 76 68" className="w-[76px] h-[68px]" fill="none" stroke="#666" strokeWidth="3.2">
          <path d="M8 30C10 14 24 3 40 3c16 0 28 12 30 28" />
          <path d="M68 38C66 54 52 65 36 65c-8 0-15-3-20-7" />
          <path d="M1 30l6-10 6 10" fill="#666" stroke="none" />
          <path d="M75 38l-6 10-6-10" fill="#666" stroke="none" />
          <path d="M28 16l10 14 10-14M38 30v24M27 34h22M27 43h22" strokeWidth="3" />
        </svg>
      </BottomItem>
      <BottomItem width={80} ml={155} label="发帖">
        <svg viewBox="0 0 66 64" className="w-[66px] h-[64px]" fill="none" stroke="#666" strokeWidth="4">
          <path d="M44 3H12a9 9 0 0 0-9 9v40a9 9 0 0 0 9 9h40a9 9 0 0 0 9-9V26" />
          <path d="M30 42L60 3" strokeWidth="6" />
        </svg>
      </BottomItem>
      <BottomItem width={80} ml={156} label="功能">
        <svg viewBox="0 0 64 62" className="w-[64px] h-[62px]" fill="none" stroke="#666" strokeWidth="3.5">
          <rect x="2" y="2" width="25" height="25" rx="4" />
          <path d="M48 1l14 14-14 14-14-14z" />
          <rect x="2" y="35" width="25" height="25" rx="4" />
          <rect x="36" y="35" width="25" height="25" rx="4" />
        </svg>
      </BottomItem>
      <BottomItem width={124} ml={135} label="加自选" color="#e0570b">
        <svg viewBox="0 0 64 64" className="w-[64px] h-[64px]" fill="none" stroke="#e0570b" strokeWidth="3.5">
          <circle cx="32" cy="32" r="30" />
          <path d="M17 32h30M32 17v30" />
        </svg>
      </BottomItem>
    </div>
  );
}

export default function App() {
  return (
    <div className="w-[1264px] h-[2780px] bg-white overflow-hidden flex flex-col font-[family-name:Roboto,'Noto_Sans_CJK_SC',sans-serif]">
      <StatusBar />
      <NavBar />
      <Stats />
      <Notice />
      <Tabs />
      <MainToolbar />
      <MainChart />
      <VolToolbar />
      <VolChart />
      <KdjToolbar />
      <KdjChart />
      <DateStrip />
      <Banner />
      <BottomTabs />
      <BottomBar />
    </div>
  );
}
